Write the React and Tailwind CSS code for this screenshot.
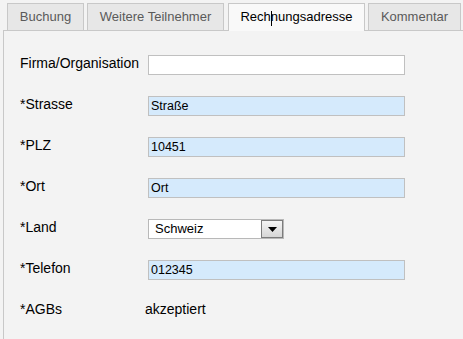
export default function App() {
  const font = { fontFamily: '"Liberation Sans", Arial, sans-serif' };
  const tabBase =
    "h-[27px] pt-[5px] border border-b-0 border-[#c8c8c8] text-[13px] leading-[16px] whitespace-nowrap text-center";
  const Row = ({ label, children, className = "" }) => (
    <div className={"flex items-start " + className}>
      <div className="w-[128px] text-[14px] leading-[16px] text-black">{label}</div>
      {children}
    </div>
  );
  const Input = ({ value, blue = true }) => (
    <div
      className={
        "w-[257px] h-[20px] border border-[#c0c0c0] pl-[2px] text-[12.5px] leading-[18px] text-black " +
        (blue ? "bg-[#d5eafc]" : "bg-white")
      }
    >
      {value}
    </div>
  );
  return (
    <div className="w-[463px] h-[339px] bg-[#f3f3f3] flex flex-col overflow-hidden" style={font}>
      <div className="flex items-end pl-[7px] pt-[3px] relative z-10">
        <div className={tabBase + " w-[77px] bg-[#e7e7e7] text-[#5a5a5a]"}>Buchung</div>
        <div className={tabBase + " w-[137px] ml-[3px] bg-[#e7e7e7] text-[#5a5a5a]"}>Weitere Teilnehmer</div>
        <div className={tabBase + " w-[137px] ml-[4px] h-[28px] -mb-px bg-[#f9f9f9] text-black relative"}>
          Rechnungsadresse
          <span className="absolute left-[42px] top-[7px] w-px h-[15px] bg-black"></span>
        </div>
        <div className={tabBase + " w-[93px] ml-[3px] bg-[#e7e7e7] text-[#5a5a5a]"}>Kommentar</div>
      </div>
      <div className="ml-[3px] flex-1 border-t border-l border-[#c8c8c8] pl-4 pt-[24px] flex flex-col gap-[21px]">
        <Row label="Firma/Organisation">
          <Input value="" blue={false} />
        </Row>
        <Row label="*Strasse">
          <Input value="Straße" />
        </Row>
        <Row label="*PLZ">
          <Input value="10451" />
        </Row>
        <Row label="*Ort">
          <Input value="Ort" />
        </Row>
        <Row label="*Land">
          <div className="w-[136px] h-[20px] border border-[#b8b8b8] bg-white flex items-stretch">
            <div className="flex-1 pl-[6px] text-[13px] leading-[18px] text-black">Schweiz</div>
            <div className="w-[22px] border border-[#7c7c7c] bg-gradient-to-b from-[#f4f4f4] to-[#d6d6d6] flex items-center justify-center">
              <svg width="9" height="5" viewBox="0 0 9 5">
                <path d="M0 0 H9 L4.5 5 Z" fill="#000" />
              </svg>
            </div>
          </div>
        </Row>
        <Row label="*Telefon">
          <Input value="012345" />
        </Row>
        <Row label="*AGBs">
          <div className="-ml-[3px] text-[14px] leading-[16px] text-black">akzeptiert</div>
        </Row>
      </div>
    </div>
  );
}
